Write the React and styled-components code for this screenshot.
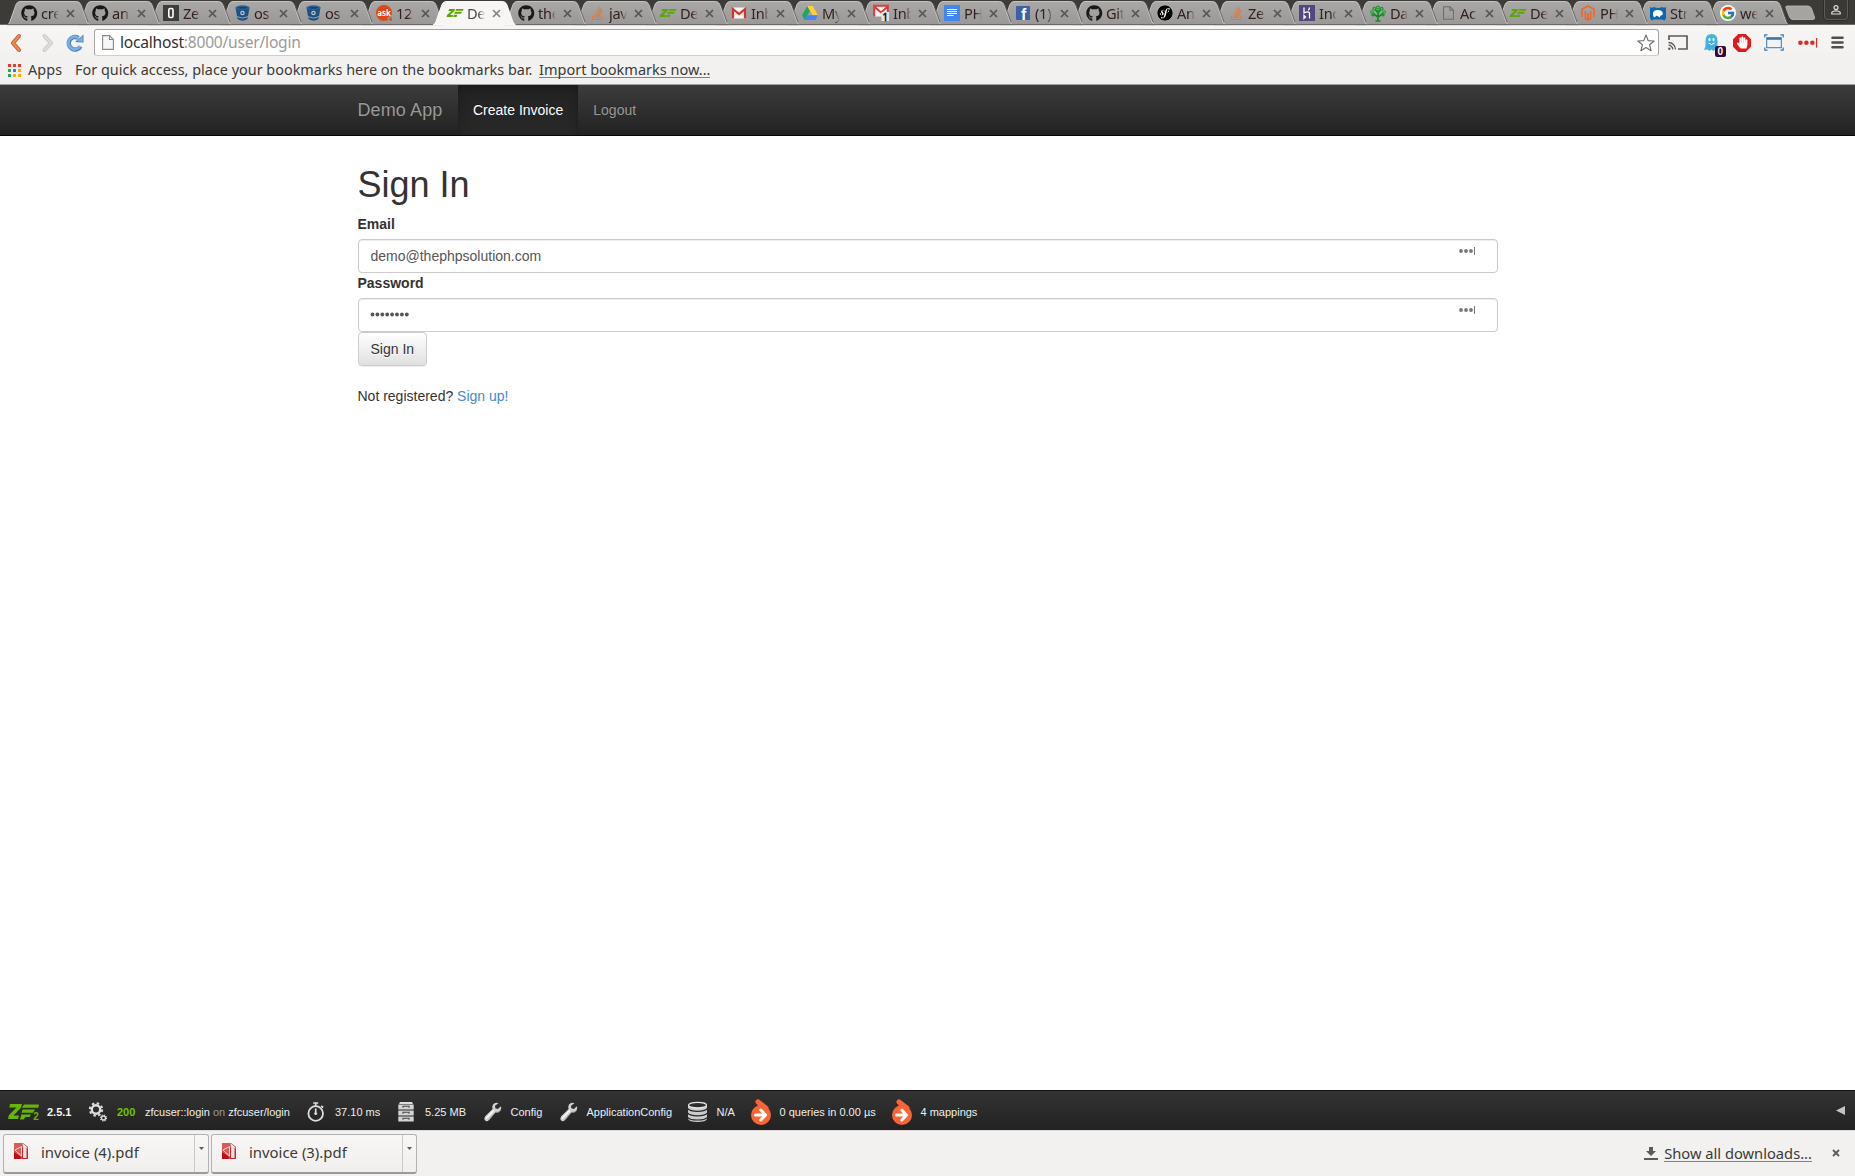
import React from 'react';
import styled, { createGlobalStyle, css } from 'styled-components';
import {
  FaGithub, FaStackOverflow, FaSymfony, FaHandPaper,
} from 'react-icons/fa';
import { FcGoogle } from 'react-icons/fc';

const UI_FONT = '"Noto Sans", "Open Sans", sans-serif';
const PAGE_FONT = '"Liberation Sans", Arial, sans-serif';

const GlobalStyle = createGlobalStyle`
  * { box-sizing: border-box; }
  body { margin: 0; background: #fff; font-family: ${PAGE_FONT}; overflow: hidden; }
  svg { display: block; flex: none; overflow: visible; }
`;

const Window = styled.div`
  height: 1176px;
  display: flex;
  flex-direction: column;
`;

/* ---------- tab strip ---------- */

const TabStrip = styled.div`
  position: relative;
  height: 25px;
  flex: none;
  display: flex;
  padding-left: 7px;
  background: #3c3b37;
  box-shadow: inset 0 -1px 0 #6b6a68;
`;

const Tab = styled.div`
  position: relative;
  z-index: ${(p) => p.$z};
  width: ${(p) => p.$width}px;
  height: 25px;
  flex: none;
  display: flex;
  align-items: center;
  padding: 0 0 0 14px;
`;

const TabShape = styled.svg`
  position: absolute;
  left: 0;
  top: 0;
  z-index: -1;
`;

const TabIcon = styled.span`
  width: 16px;
  height: 16px;
  margin: 1px 4px 0 0;
  flex: none;
  display: flex;
  align-items: center;
  justify-content: center;
`;

const TabTitle = styled.span`
  width: 18px;
  flex: none;
  overflow: hidden;
  white-space: nowrap;
  font: 14.6px/24px ${UI_FONT};
  letter-spacing: -0.3px;
  color: ${(p) => (p.$active ? '#4c4a48' : '#33211d')};
  mask-image: linear-gradient(90deg, #000 65%, transparent 100%);
`;

const TabClose = styled.svg`
  margin: 1px 0 0 6.5px;
`;

const NewTab = styled.svg`
  position: relative;
  margin: 5px 0 0 9px;
`;

const UserBox = styled.div`
  width: 24px;
  height: 20px;
  margin: 0 7px 0 auto;
  display: flex;
  align-items: center;
  justify-content: center;
  border: 1px solid #5d5b57;
  border-top: 0;
  border-radius: 0 0 4px 4px;
  background: #3a3935;
  box-shadow: 0 0 0 1px #2d2c29;
`;

/* ---------- toolbar and bookmarks ---------- */

const Toolbar = styled.div`
  height: 33px;
  flex: none;
  display: flex;
  align-items: flex-start;
  padding-top: 4px;
  background: linear-gradient(#f7f6f5, #f2f1f0);
`;

const NavIcons = styled.div`
  width: 94px;
  height: 27px;
  display: flex;
  align-items: center;
  padding-left: 10px;
`;

const BackIcon = styled.svg``;
const ForwardIcon = styled.svg`
  margin-left: 19.5px;
`;
const ReloadIcon = styled.svg`
  margin-left: 12px;
`;

const Omnibox = styled.div`
  width: 1565px;
  height: 27px;
  display: flex;
  align-items: center;
  padding: 0 3px 0 7px;
  border: 1px solid #a6a5a3;
  border-bottom-color: #d0cfcd;
  border-radius: 3px;
  background: #fff;
`;

const Url = styled.span`
  flex: 1;
  margin: 0 0 1px 6px;
  font: 15.6px/25px ${UI_FONT};
  letter-spacing: -0.23px;
  color: #9b9a99;
`;

const Host = styled.span`
  color: #33312f;
`;

const Extensions = styled.div`
  height: 27px;
  flex: 1;
  display: flex;
  align-items: center;
  justify-content: space-between;
  padding: 0 11px 0 9px;
`;

const GhostWrap = styled.span`
  position: relative;
  margin-left: 2px;
`;

const Badge = styled.span`
  position: absolute;
  left: 11px;
  top: 12px;
  width: 11px;
  height: 11px;
  border-radius: 2px;
  background: #330a33;
  color: #fff;
  font: bold 10px/11px ${PAGE_FONT};
  text-align: center;
`;

const BookmarksBar = styled.div`
  height: 27px;
  flex: none;
  display: flex;
  align-items: center;
  padding: 0 0 3px 8px;
  background: #f2f1f0;
  border-bottom: 1px solid #a3a2a0;
  font: 14.4px/20px ${UI_FONT};
  color: #3b3a38;
  white-space: nowrap;
`;

const AppsGrid = styled.span`
  width: 13px;
  display: grid;
  grid-template-columns: repeat(3, 3px);
  gap: 2px;
  margin: 2px 7px 0 0;
`;

const AppsDot = styled.i`
  height: 3px;
  background: ${(p) => p.$color};
`;

const AppsLabel = styled.span`
  width: 47px;
  letter-spacing: 0.15px;
`;

const BookmarkHint = styled.span`
  width: 464px;
  letter-spacing: 0.01px;
`;

const UnderlinedLink = styled.span`
  border-bottom: 1px solid #82817f;
  font-size: ${(p) => p.$size}px;
  line-height: 16px;
`;

/* ---------- page ---------- */

const Page = styled.main`
  flex: 1;
  background: #fff;
`;

const Container = styled.div`
  width: 1170px;
  margin: 0 auto;
  padding: 0 15px;
  color: #333;
  font: 14px/20px ${PAGE_FONT};
`;

const Navbar = styled.nav`
  height: 51px;
  border-bottom: 1px solid #080808;
  background: linear-gradient(#3c3c3c, #222);
`;

const NavRow = styled(Container)`
  display: flex;
`;

const Brand = styled.a`
  width: 100.5px;
  padding: 15px 0;
  font-size: 18px;
  line-height: 20px;
  letter-spacing: 0.1px;
  color: #999;
  text-shadow: 0 -1px 0 rgba(0, 0, 0, 0.25);
`;

const NavLink = styled.a`
  height: 50px;
  padding: 15px;
  line-height: 20px;
  color: #999;
  text-shadow: 0 -1px 0 rgba(0, 0, 0, 0.25);
  ${(p) => p.$active && css`
    color: #fff;
    background: linear-gradient(#222, #282828);
    box-shadow: inset 0 3px 9px rgba(0, 0, 0, 0.25);
  `}
`;

const Form = styled(Container)`
  padding-top: 29px;
`;

const Title = styled.h1`
  margin: 0 0 9px;
  font-size: 36px;
  font-weight: 400;
  line-height: 40px;
`;

const Label = styled.label`
  display: block;
  height: 20px;
  margin-bottom: 5px;
  font-weight: bold;
`;

const Field = styled.div`
  height: 34px;
  display: flex;
  align-items: flex-start;
  justify-content: space-between;
  padding: 6px 22px 6px 12px;
  border: 1px solid #ccc;
  border-radius: 4px;
  box-shadow: inset 0 1px 1px rgba(0, 0, 0, 0.075);
  color: #555;
`;

const MaskDots = styled.svg`
  margin: 6px 0 0 -0.5px;
`;

const FieldMark = styled.svg`
  margin-top: 1px;
`;

const Button = styled.button`
  display: block;
  height: 34px;
  margin: 0 0 20px;
  padding: 6px 12px;
  border: 1px solid #ccc;
  border-radius: 4px;
  background: linear-gradient(#fff, #e0e0e0);
  box-shadow: inset 0 1px 0 rgba(255, 255, 255, 0.15), 0 1px 1px rgba(0, 0, 0, 0.075);
  font: 14px/20px ${PAGE_FONT};
  color: #333;
  text-shadow: 0 1px 0 #fff;
`;

const Link = styled.a`
  color: #428bca;
`;

/* ---------- developer toolbar ---------- */

const DevBar = styled.div`
  height: 40px;
  flex: none;
  display: flex;
  align-items: center;
  padding: 3px 10px 0 8px;
  border-top: 1px solid #111;
  background: linear-gradient(#333, #222);
  font: 11px/16px ${PAGE_FONT};
  color: #eee;
  white-space: nowrap;
`;

const DevItem = styled.div`
  width: ${(p) => p.$width}px;
  height: 30px;
  flex: none;
  display: flex;
  align-items: center;
`;

const DevIcon = styled.span`
  width: ${(p) => p.$width}px;
  flex: none;
`;

const Version = styled.b`
  color: #f5f5f5;
`;

const Status = styled.b`
  width: 28px;
  color: #70c400;
`;

const Muted = styled.span`
  color: #999;
`;

const Collapse = styled.svg`
  margin: 0 0 4px auto;
`;

/* ---------- downloads ---------- */

const Shelf = styled.div`
  height: 46px;
  flex: none;
  display: flex;
  align-items: center;
  padding: 0 15px 0 3px;
  border-top: 1px solid #dcdbda;
  background: #f2f1f0;
  color: #3b3a38;
`;

const Download = styled.div`
  width: 206px;
  height: 40px;
  margin: 0 2px 0 0;
  flex: none;
  display: flex;
  border: 1px solid #b3b2b0;
  border-bottom: 2px solid #9b9a98;
  border-radius: 3px;
  background: linear-gradient(#f8f7f6, #f0efee);
`;

const DownloadFile = styled.div`
  width: 191px;
  display: flex;
  align-items: center;
  gap: 13px;
  padding: 0 0 2px 10px;
  border-right: 1px solid #c9c8c6;
  font: 14.9px/20px ${UI_FONT};
`;

const PdfIcon = styled.svg`
  margin-bottom: 2px;
`;

const DownloadMenu = styled.div`
  flex: 1;
  display: flex;
  justify-content: center;
  padding-top: 12px;
`;

const ShelfActions = styled.div`
  margin: 0 0 1px auto;
  display: flex;
  align-items: center;
  gap: 6px;
  font: 14.7px/20px ${UI_FONT};
`;

const ShelfClose = styled.svg`
  margin-left: 14px;
`;

/* ---------- favicons ---------- */

const ZendMark = ({ w = 16, color = '#5ba600' }) => (
  <svg width={w} height={w / 2} viewBox="0 0 32 16">
    <path d="M4 0H16L15 4L6 12H12L11 16H-1L0 12L9 4H3Z" fill={color} />
    <path d="M18 0H33L32 3.6H17ZM15.5 5.5H30L28 9.5H14.500ZM13.500 11.500H21L19 16H12.500Z" fill={color} />
  </svg>
);

const Gmail = ({ badge }) => (
  <svg width="16" height="16" viewBox="0 0 16 16">
    <path d={badge ? 'M1 0.500H15V11.500H1Z' : 'M1 2.500H15V13.500H1Z'} fill="#f5f5f5" />
    {badge ? (
      <>
        <path d="M1.200 11.500V1.500L8 7.500L14.800 1.500V11.500M1 .8H15" fill="none" stroke="#de3a3a" strokeWidth="2" />
        <rect x="8.500" y="7" width="7.500" height="9" fill="#e4e4e4" />
        <text x="9.300" y="15.500" fontSize="10.500" fontFamily={UI_FONT} fill="#000" stroke="#000" strokeWidth=".4">1</text>
      </>
    ) : (
      <>
        <path d="M1 13.500L6 8M15 13.500L10 8" stroke="#ccc" strokeWidth=".8" />
        <path d="M2 13.500V4L8 9L14 4V13.500" fill="none" stroke="#d8322c" strokeWidth="2.200" />
      </>
    )}
  </svg>
);

const Bucket = () => (
  <svg width="15" height="16" viewBox="0 0 15 16">
    <path d="M.5 2.500L2.500 14Q7.500 17.500 12.500 14L14.500 2.500Z" fill="#205081" />
    <ellipse cx="7.500" cy="2.600" rx="7" ry="2.300" fill="#2f659c" />
    <ellipse cx="7.500" cy="2.700" rx="4.600" ry="1" fill="#18406b" />
    <circle cx="7.500" cy="8" r="1.700" fill="#205081" stroke="#b4c6d8" strokeWidth="1.200" />
    <path d="M2 11.700Q7.500 14.500 13 11.700" stroke="#a3a2a0" strokeWidth="1" fill="none" />
  </svg>
);

const FileIcon = ({ fill = 'none', stroke = '#6c6b69', w = 12, h = 15 }) => (
  <svg width={w} height={h} viewBox="0 0 12 15">
    <path d="M.6 .6H7.500L11.400 4.500V14.400H.6ZM7.500 .6V4.500H11.400" fill={fill} stroke={stroke} strokeWidth="1.100" />
  </svg>
);

const StarIcon = styled.svg`
  margin-right: 0;
`;

const SymfonyDisc = styled.span`
  border-radius: 50%;
  background: #fff;
`;

const favicons = {
  github: () => <FaGithub size={16.5} color="#191717" />,
  zero: () => (
    <svg width="16" height="16">
      <rect width="16" height="16" fill="#3d3d3d" />
      <rect x="5.800" y="3.500" width="4.200" height="9" rx="1.500" fill="none" stroke="#fff" strokeWidth="1.600" />
    </svg>
  ),
  bucket: Bucket,
  ask: () => (
    <svg width="16" height="16">
      <path d="M8 0A8 8 0 1 1 8 16A8 8 0 1 1 8 0ZM11 14L16 16L15 10Z" fill="#dd4814" />
      <text x="1.300" y="11" fontSize="8.500" fontWeight="bold" textLength="13.500" lengthAdjust="spacingAndGlyphs" fontFamily={UI_FONT} fill="#fff">ask</text>
    </svg>
  ),
  zend: () => <ZendMark />,
  stack: () => <FaStackOverflow size={15} color="#de7b36" />,
  gmail: () => <Gmail />,
  gmailBadge: () => <Gmail badge />,
  drive: () => (
    <svg width="16" height="14" viewBox="0 0 16 14">
      <path d="M5.300 0L0 9.300L2.700 14L8 4.700Z" fill="#1fa463" />
      <path d="M5.300 0H10.700L16 9.300H10.600Z" fill="#fecf3e" />
      <path d="M2.700 14L5.400 9.300H16L13.300 14Z" fill="#4285f4" />
    </svg>
  ),
  docs: () => (
    <svg width="16" height="16">
      <rect width="16" height="16" rx="1" fill="#4285f4" />
      <path d="M3 4.500H13M3 6.500H13M3 8.500H13M3 10.500H9.500" stroke="#fff" strokeWidth="1" />
    </svg>
  ),
  facebook: () => (
    <svg width="14" height="14">
      <rect width="14" height="14" rx="1" fill="#4060a5" />
      <text x="5" y="14" fontSize="16" fontWeight="bold" fontFamily={PAGE_FONT} fill="#fff">f</text>
    </svg>
  ),
  symfony: () => <SymfonyDisc><FaSymfony size={16} color="#000" /></SymfonyDisc>,
  heroku: () => (
    <svg width="16" height="16">
      <rect width="16" height="16" fill="#51487f" />
      <path d="M5 2.500V7.800Q10.500 5.500 10.500 8.500V13.500M10.500 2.500Q10.500 4 9.300 5.300M5 10.500V13.500L6.500 12Z" fill="none" stroke="#fff" strokeWidth="1.300" />
    </svg>
  ),
  tree: () => (
    <svg width="16" height="16" viewBox="0 0 16 16">
      <path d="M8 16V6M8 12L3 8.500M8 12L13 8.500M8 8L5 4M8 8L11 4M5.500 16H10.500" stroke="#128a20" strokeWidth="1.600" />
      <g fill="#19982a">
        <circle cx="8" cy="2.500" r="2" /><circle cx="4.300" cy="3.600" r="1.900" /><circle cx="11.700" cy="3.600" r="1.900" />
        <circle cx="1.900" cy="7" r="1.800" /><circle cx="14.100" cy="7" r="1.800" />
        <circle cx="2.800" cy="10" r="1.500" /><circle cx="13.200" cy="10" r="1.500" /><circle cx="8" cy="6.500" r="1.500" />
      </g>
      <g fill="#9ad09e">
        <circle cx="8" cy="2.500" r=".7" /><circle cx="4.300" cy="3.600" r=".7" /><circle cx="11.700" cy="3.600" r=".7" />
        <circle cx="1.900" cy="7" r=".7" /><circle cx="14.100" cy="7" r=".7" />
      </g>
    </svg>
  ),
  file: () => <FileIcon h={14} w={11} />,
  magento: () => (
    <svg width="14" height="16" viewBox="0 0 14 16">
      <path d="M1 12V4.200L7 .9L13 4.200V12M4.400 6V13.500L7 15L9.600 13.500V6M7 8V15" fill="none" stroke="#ee672f" strokeWidth="1.700" />
    </svg>
  ),
  studio: () => (
    <svg width="16" height="15" viewBox="0 0 16 15">
      <path d="M0 1Q2 2.500 4 1Q8 3 12 1Q14 2.500 16 1V12L14.500 14.500L12 13.500H4L1.500 14.500L0 12Z" fill="#0d67ac" />
      <path d="M3 7Q4 3.500 8 4Q12.500 4 12.800 7.500Q12.500 10 10.500 9.500L9.500 11.500L7 9.500L4 11.500Q2.500 9.500 3 7Z" fill="#fff" />
    </svg>
  ),
  google: () => (
    <svg width="16" height="16">
      <circle cx="8" cy="8" r="8" fill="#fff" />
      <FcGoogle x="0.500" y="0.500" size={15} />
    </svg>
  ),
};

const tabs = [
  ['github', 'cre'], ['github', 'an'], ['zero', 'Ze'], ['bucket', 'os'], ['bucket', 'os'],
  ['ask', '12'], ['zend', 'De', true], ['github', 'the'], ['stack', 'jav'], ['zend', 'De'],
  ['gmail', 'Inb'], ['drive', 'My'], ['gmailBadge', 'Inb'], ['docs', 'PH'], ['facebook', '(1)'],
  ['github', 'Git'], ['symfony', 'An'], ['stack', 'Ze'], ['heroku', 'Inc'], ['tree', 'Da'],
  ['file', 'Ac'], ['zend', 'De'], ['magento', 'PH'], ['studio', 'Str'], ['google', 'we'],
];

const TAB_PATH = 'M0 25Q2 24 2.800 22L9 4.500Q10.300 1.500 13 1.500H69.500Q72.500 1.500 73.800 4.500L80 22Q81 24 82.500 25Z';

function BrowserTab({ icon, title, active, index }) {
  const Icon = favicons[icon];
  return (
    <Tab $z={active ? 60 : 40 - index} $width={index < 19 ? 71 : 70}>
      <TabShape width="83" height="25">
        <path d={TAB_PATH} fill={active ? '#f7f6f5' : 'url(#tabFill)'} stroke={active ? '#fbfaf9' : '#c4c3c1'} strokeWidth="1" />
        {!active && <path d="M0 24.500H82.500" stroke="#6b6a68" />}
        {!active && <path d="M74.700 4.500L81 22" stroke="#5e5d5a" strokeWidth=".8" />}
      </TabShape>
      <TabIcon><Icon /></TabIcon>
      <TabTitle $active={active}>{title}</TabTitle>
      <TabClose width="9" height="9">
        <path d="M1 1L8 8M8 1L1 8" stroke={active ? '#85827f' : '#5c5350'} strokeWidth="1.700" />
      </TabClose>
    </Tab>
  );
}

/* ---------- developer toolbar icons ---------- */

const Stopwatch = () => (
  <svg width="18" height="20" viewBox="-.7 0 18 20">
    <circle cx="9" cy="11.500" r="7.300" fill="none" stroke="#ddd" strokeWidth="1.800" />
    <path d="M9 6.500V13M7.500 11.500H10.500M9 1V4M6.500 1H11.500M14.500 4L16.500 5.500" stroke="#ddd" strokeWidth="1.700" />
  </svg>
);

const Cabinet = () => (
  <svg width="16" height="20" viewBox="0 0 16 20">
    <path d="M2 0H14L15 2H1Z" fill="#ddd" />
    {[2.5, 8.5, 14.5].map((y) => (
      <g key={y}>
        <rect x=".3" y={y} width="15.400" height="5" fill="#d4d4d4" />
        <path d={`M5 ${y + 3.2}V${y + 1.7}H11V${y + 3.2}`} fill="none" stroke="#444" strokeWidth="1.100" />
      </g>
    ))}
  </svg>
);

const Gears = () => (
  <svg width="19" height="20" viewBox="0 0 19 20">
    <g fill="none" stroke="#ddd">
      <circle cx="7" cy="7.500" r="4.200" strokeWidth="2.400" />
      <circle cx="7" cy="7.500" r="6.200" strokeWidth="2" strokeDasharray="2.430 2.430" />
      <circle cx="14.500" cy="16" r="2" strokeWidth="1.300" />
      <circle cx="14.500" cy="16" r="3" strokeWidth="1.200" strokeDasharray="1.180 1.180" />
    </g>
  </svg>
);

const WrenchIcon = () => (
  <svg width="18" height="20" viewBox="0 0 18 20">
    <path d="M14.500 1.200Q11 0 9 2.500Q7.800 4.500 8.600 7L1 14.500Q-.5 17 1.200 18.600Q3 20 5 18L11.500 10.300Q14.500 11 16.500 8.500Q17.800 6.300 17 4.200L13.800 7L11.300 6.300L11 3.800Z" fill="#d0d1d2" />
    <path d="M2 16.500L9.800 8.500" stroke="#fff" strokeWidth="1.200" />
    <path d="M4.800 18L11.500 10.300Q14.500 11 16.500 8.500" stroke="#8b8f92" strokeWidth=".9" fill="none" />
  </svg>
);

const Database = () => (
  <svg width="19" height="20" viewBox="0 0 19 20">
    <path d="M0 3V17Q1 20 9.500 20T19 17V3Z" fill="#cbcbcb" />
    <ellipse cx="9.500" cy="3.200" rx="9" ry="2.800" fill="#2e2e2e" stroke="#e6e6e6" strokeWidth="1.300" />
    <path d="M-.5 6.500Q2 9.300 9.500 9.300T19.500 6.500M-.5 11Q2 13.800 9.500 13.800T19.500 11M-.5 15.300Q2 18 9.500 18T19.500 15.300" fill="none" stroke="#292929" strokeWidth="1.200" />
  </svg>
);

const Doctrine = () => (
  <svg width="20" height="26" viewBox="0 0 20 26">
    <path d="M4.500 2Q5.500 -.5 8 .4L17 7.500Q18.500 9 16.500 10L14 12L9 8.500L5 4.500Q4 3.500 4.500 2Z" fill="#fb6434" />
    <circle cx="10" cy="16" r="10" fill="#fb6434" />
    <path d="M4.500 16H14M9.800 11L14.500 16L9.800 21" fill="none" stroke="#fff" strokeWidth="3" strokeLinecap="round" strokeLinejoin="round" />
  </svg>
);

const ZendLogo = () => (
  <svg width="31" height="16" viewBox="0 0 31 16">
    <path d="M2 0H14L13 3.800L5.500 11.500H11L10 15H0L.8 11.300L8.500 3.500H1.200Z" fill="#68b604" />
    <path d="M16 .5H31L30.300 3.800H13.800ZM14.500 5.500H27L25 8.800H13.500ZM13.300 10.500H23L21.500 13H17.500L15.500 15.500H12Z" fill="#68b604" />
    <text x="25.300" y="15.800" fontSize="10" fontWeight="bold" fontFamily={PAGE_FONT} fill="#68b604">2</text>
  </svg>
);

const devItems = [
  { Icon: Stopwatch, width: 92, icon: 29, label: '37.10 ms' },
  { Icon: Cabinet, width: 86, icon: 27, label: '5.25 MB' },
  { Icon: WrenchIcon, width: 76, icon: 26.5, label: 'Config' },
  { Icon: WrenchIcon, width: 128, icon: 26.5, label: 'ApplicationConfig' },
  { Icon: Database, width: 63, icon: 28.5, label: 'N/A' },
  { Icon: Doctrine, width: 141, icon: 28.5, label: '0 queries in 0.00 µs' },
  { Icon: Doctrine, width: 100, icon: 28.5, label: '4 mappings' },
];

const appColors = ['#e8382f', '#e8382f', '#e8382f', '#31a05c', '#2f7de8', '#f3ad0c', '#31a05c', '#f3ad0c', '#f3ad0c'];

const PasswordMark = ({ color, size = 1 }) => (
  <FieldMark width={16 * size} height={8 * size} viewBox="0 0 16 8">
    <g fill={color}>
      <circle cx="2" cy="4" r="1.900" /><circle cx="7" cy="4" r="1.900" /><circle cx="12" cy="4" r="1.900" />
      <rect x="15" y="0" width="1" height="8" />
    </g>
  </FieldMark>
);

function DownloadItem({ name }) {
  return (
    <Download>
      <DownloadFile>
        <PdfIcon width="14" height="16" viewBox="0 0 14 16">
          <path d="M0 0H9L14 4V16H0Z" fill="#c9252c" />
          <path d="M0 0H8V16H0Z" fill="#dc5a55" />
          <path d="M0 9L7 14V16H0Z" fill="#b70f1c" />
          <path d="M1 7L7.500 3.500V13Z" fill="none" stroke="#f6dcda" strokeWidth="1" />
          <path d="M9 5H12.500V15H9Z" fill="#e9e5e3" />
          <path d="M8.500 0L13.700 5H9Z" fill="#fff" stroke="#aaa" strokeWidth=".5" />
        </PdfIcon>
        {name}
      </DownloadFile>
      <DownloadMenu>
        <svg width="5" height="3"><path d="M0 0H5L2.500 3Z" fill="#5b5a58" /></svg>
      </DownloadMenu>
    </Download>
  );
}

export default function App() {
  return (
    <Window>
      <GlobalStyle />
      <TabStrip>
        <svg width="0" height="0">
          <defs>
            <linearGradient id="tabFill" x1="0" y1="0" x2="0" y2="1">
              <stop offset="0" stopColor="#a9a8a6" />
              <stop offset="1" stopColor="#999896" />
            </linearGradient>
          </defs>
        </svg>
        {tabs.map(([icon, title, active], i) => (
          <BrowserTab key={i} icon={icon} title={title} active={active} index={i} />
        ))}
        <NewTab width="31" height="15">
          <path d="M2 1H23Q25.500 1 26.500 3.500L29.500 12Q30 14.500 28 14.500H8Q5.500 14.500 4.500 12L1 3Q.3 1 2 1Z" fill="#a5a4a1" stroke="#c0bfbc" strokeWidth=".8" />
        </NewTab>
        <UserBox>
          <svg width="10" height="10" viewBox="0 0 10 10">
            <circle cx="5" cy="2.600" r="2" fill="none" stroke="#e0dfdc" strokeWidth="1.200" />
            <path d="M.8 9V7.300Q2 5.800 5 5.800T9.200 7.300V9Z" fill="none" stroke="#e0dfdc" strokeWidth="1.200" />
          </svg>
        </UserBox>
      </TabStrip>

      <Toolbar>
        <NavIcons>
          <BackIcon width="12" height="18">
            <path d="M9 2L3 9L9 16" fill="none" stroke="#c5562c" strokeWidth="4" strokeLinecap="round" strokeLinejoin="round" />
            <path d="M9 2L3 9L9 16" fill="none" stroke="#ef8a51" strokeWidth="2.200" strokeLinecap="round" strokeLinejoin="round" />
          </BackIcon>
          <ForwardIcon width="12" height="18">
            <path d="M2.500 2L9 9L2.500 16" fill="none" stroke="#c6c5c3" strokeWidth="4" strokeLinecap="round" strokeLinejoin="round" />
            <path d="M2.500 2L9 9L2.500 16" fill="none" stroke="#dddcda" strokeWidth="2.400" strokeLinecap="round" strokeLinejoin="round" />
          </ForwardIcon>
          <ReloadIcon width="18" height="18">
            <path d="M14.500 12.500A6.300 6.300 0 1 1 12.500 4" fill="none" stroke="#4a82be" strokeWidth="4.400" />
            <path d="M9 8L17.500 8.500V.5Z" fill="#4a82be" />
            <path d="M14 12.300A6.300 6.300 0 1 1 12.500 4" fill="none" stroke="#79aee2" strokeWidth="2.800" />
            <path d="M11 7.300L16.700 7.700V2Z" fill="#79aee2" />
          </ReloadIcon>
        </NavIcons>
        <Omnibox>
          <FileIcon fill="#f7f7f7" stroke="#8b8a88" />
          <Url><Host>localhost</Host>:8000/user/login</Url>
          <StarIcon width="18" height="18" viewBox="0 0 18 18">
            <path d="M9 1L11.200 6.600L17.200 7L12.600 10.800L14.100 16.700L9 13.400L3.900 16.700L5.400 10.800L.8 7L6.800 6.600Z" fill="#fff" stroke="#737271" strokeWidth="1.200" strokeLinejoin="round" />
          </StarIcon>
        </Omnibox>
        <Extensions>
          <svg width="20" height="15" viewBox="0 0 20 15">
            <path d="M1 5V1H19V14H10" fill="none" stroke="#5c5b59" strokeWidth="1.700" />
            <path d="M.5 7.500A7 7 0 0 1 7.500 14.500M.5 10.200A4.300 4.300 0 0 1 4.800 14.500" fill="none" stroke="#5c5b59" strokeWidth="1.300" />
            <circle cx="1.300" cy="13.700" r="1.200" fill="#5c5b59" />
          </svg>
          <GhostWrap>
            <svg width="15" height="17" viewBox="0 0 15 17">
              <path d="M1.500 7Q1.500 0 7.500 0T13.500 7V12.500L15 16L11.500 15.500L9.500 17L7.500 15.500L5.500 17L3.500 15.500L0 16L1.500 12.500Z" fill="#3fb2e3" />
              <ellipse cx="5.500" cy="5.500" rx="1.100" ry="1.700" fill="#fff" /><ellipse cx="9.500" cy="5.500" rx="1.100" ry="1.700" fill="#fff" />
              <path d="M4.500 9Q7.500 12 10.500 9" fill="none" stroke="#fff" strokeWidth="1" />
            </svg>
            <Badge>0</Badge>
          </GhostWrap>
          <svg width="18" height="18" viewBox="0 0 18 18">
            <path d="M5.300 0H12.700L18 5.300V12.700L12.700 18H5.300L0 12.700V5.300Z" fill="#df1b1e" />
            <FaHandPaper x="3.200" y="2.500" size={12} color="#fff" />
          </svg>
          <svg width="20" height="17" viewBox="0 0 20 17">
            <path d="M.8 3.500V.8H3.500M16.500 .8H19.200V3.500M.8 13.500V16.200H3.500M16.500 16.200H19.200V13.500" fill="none" stroke="#3a78ac" strokeWidth="1.200" />
            <rect x="2.700" y="3.700" width="14.600" height="10" fill="#f0f3f5" stroke="#3a78ac" strokeWidth="1" />
            <path d="M3 4.800H17" stroke="#3a78ac" strokeWidth="2" />
          </svg>
          <PasswordMark color="#d4302a" size={1.2} />
          <svg width="13" height="13">
            <path d="M1.500 1.800H11.500M1.500 6.500H11.500M1.500 11.200H11.500" stroke="#4f4e4c" strokeWidth="2.600" strokeLinecap="round" />
          </svg>
        </Extensions>
      </Toolbar>

      <BookmarksBar>
        <AppsGrid>{appColors.map((c, i) => <AppsDot key={i} $color={c} />)}</AppsGrid>
        <AppsLabel>Apps</AppsLabel>
        <BookmarkHint>For quick access, place your bookmarks here on the bookmarks bar.</BookmarkHint>
        <UnderlinedLink $size={14.5}>Import bookmarks now...</UnderlinedLink>
      </BookmarksBar>

      <Page>
        <Navbar>
          <NavRow>
            <Brand>Demo App</Brand>
            <NavLink $active>Create Invoice</NavLink>
            <NavLink>Logout</NavLink>
          </NavRow>
        </Navbar>
        <Form>
          <Title>Sign In</Title>
          <Label>Email</Label>
          <Field>
            demo@thephpsolution.com
            <PasswordMark color="#777" />
          </Field>
          <Label>Password</Label>
          <Field>
            <MaskDots width="40" height="6">
              {[0, 1, 2, 3, 4, 5, 6, 7].map((i) => <circle key={i} cx={2.5 + i * 4.9} cy="3.500" r="1.900" fill="#555" />)}
            </MaskDots>
            <PasswordMark color="#777" />
          </Field>
          <Button>Sign In</Button>
          Not registered? <Link>Sign up!</Link>
        </Form>
      </Page>

      <DevBar>
        <DevItem $width={81}>
          <DevIcon $width={39}><ZendLogo /></DevIcon>
          <Version>2.5.1</Version>
        </DevItem>
        <DevItem $width={217}>
          <DevIcon $width={28}><Gears /></DevIcon>
          <Status>200</Status>
          <span>zfcuser::login <Muted>on</Muted> zfcuser/login</span>
        </DevItem>
        {devItems.map(({ Icon, width, icon, label }) => (
          <DevItem key={label} $width={width}>
            <DevIcon $width={icon}><Icon /></DevIcon>
            {label}
          </DevItem>
        ))}
        <Collapse width="9" height="9"><path d="M9 0V9L0 4.500Z" fill="#c4c4c4" /></Collapse>
      </DevBar>

      <Shelf>
        <DownloadItem name="invoice (4).pdf" />
        <DownloadItem name="invoice (3).pdf" />
        <ShelfActions>
          <svg width="14" height="13"><path d="M5 0H9V4H12L7 9L2 4H5ZM0 11H14V13H0Z" fill="#5b5a58" /></svg>
          <UnderlinedLink $size={14.7}>Show all downloads...</UnderlinedLink>
          <ShelfClose width="8" height="8"><path d="M1 1L7 7M7 1L1 7" stroke="#5b5a58" strokeWidth="1.800" /></ShelfClose>
        </ShelfActions>
      </Shelf>
    </Window>
  );
}
